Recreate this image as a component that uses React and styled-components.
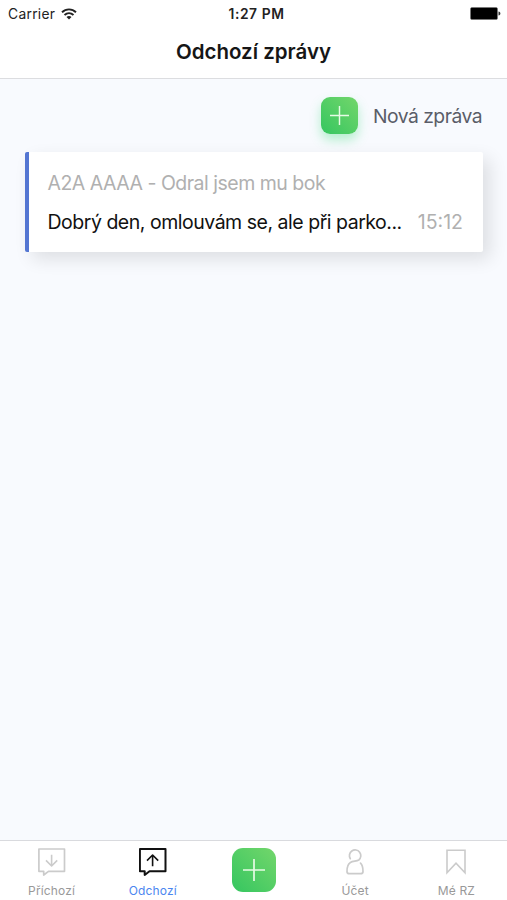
import React from "react";
import styled, { createGlobalStyle } from "styled-components";

const GlobalStyle = createGlobalStyle`
  *, *::before, *::after { box-sizing: border-box; }
  body { margin: 0; font-family: Inter, "Liberation Sans", sans-serif; background: #f8fafe; }
`;

const Screen = styled.div`
  display: flex;
  flex-direction: column;
  width: 507px;
  height: 900px;
  overflow: hidden;
  background: #f8fafe;
`;

const Header = styled.header`
  height: 79px;
  flex: none;
  background: #fff;
  border-bottom: 1px solid #dcdde0;
`;

const StatusBar = styled.div`
  display: grid;
  grid-template-columns: 1fr auto 1fr;
  align-items: center;
  height: 27px;
  padding: 0 6px 0 8px;
  color: #222;
`;

const Carrier = styled.div`
  display: flex;
  align-items: center;
  gap: 6px;
  font-size: 13.8px;
  letter-spacing: 0.3px;
`;

const Clock = styled.div`
  padding-left: 4px;
  font-size: 13.8px;
  font-weight: 600;
  letter-spacing: 0.6px;
`;

const BatterySlot = styled.div`
  display: flex;
  justify-content: flex-end;
`;

const Title = styled.h1`
  margin: 0;
  padding-top: 12px;
  font-size: 20.5px;
  line-height: 26px;
  font-weight: 600;
  text-align: center;
  color: #161616;
`;

const Content = styled.main`
  flex: 1;
  padding: 18px 24px 0 25px;
`;

const NewMessage = styled.div`
  display: flex;
  justify-content: flex-end;
  align-items: center;
  gap: 14.5px;
  height: 37px;
  padding-right: 1px;
`;

const NewLabel = styled.span`
  font-size: 19.3px;
  letter-spacing: -0.5px;
  color: #5a5d68;
`;

const AddButton = styled.button`
  display: grid;
  place-items: center;
  width: ${(p) => p.$size}px;
  height: ${(p) => p.$size}px;
  padding: 0;
  border: 0;
  border-radius: ${(p) => p.$radius}px;
  background: linear-gradient(45deg, #35c660, #73d66b);
  box-shadow: ${(p) => (p.$glow ? "0 6px 11px rgba(53, 218, 115, 0.35)" : "none")};
`;

const MessageCard = styled.article`
  height: 100px;
  margin-top: 18px;
  padding: 18px 20px 0 18.5px;
  border-left: 4px solid #5476d2;
  border-radius: 2px;
  background: #fff;
  box-shadow: 7px 7px 18px rgba(0, 0, 0, 0.11);
`;

const Subject = styled.div`
  font-size: 19.5px;
  line-height: 26px;
  letter-spacing: -0.5px;
  white-space: nowrap;
  color: #b0b0b0;
`;

const PreviewRow = styled.div`
  display: flex;
  justify-content: space-between;
  margin-top: 13px;
  font-size: 19.5px;
  line-height: 26px;
  white-space: nowrap;
`;

const Preview = styled.span`
  letter-spacing: -0.48px;
  color: #111;
`;

const Time = styled.time`
  color: #b0b0b0;
`;

const TabBar = styled.nav`
  display: grid;
  grid-template-columns: repeat(5, 1fr);
  flex: none;
  height: 60px;
  padding-left: 1px;
  border-top: 1px solid #d9dade;
  background: #fff;
`;

const Tab = styled.div`
  display: flex;
  flex-direction: column;
  align-items: center;
  padding-top: 7px;
  color: ${(p) => (p.$active ? "#111" : "#cbcbcb")};
`;

const TabLabel = styled.span`
  margin-top: 6px;
  font-size: 12px;
  line-height: 16px;
  letter-spacing: 0.15px;
  color: ${(p) => (p.$active ? "#4b86f0" : "#999")};
`;

const Wifi = () => (
  <svg width="16" height="12" viewBox="0 0 16 12" fill="none" stroke="#222" strokeWidth="1.9">
    <path d="M1 4.3C5 .4 11 .4 15 4.3M3.5 7C6.2 4.5 9.8 4.5 12.5 7" />
    <path d="M8 11.5 5.5 9C7 7.7 9 7.7 10.5 9Z" fill="#222" stroke="none" />
  </svg>
);

const Battery = () => (
  <svg width="31" height="13" viewBox="0 0 31 13">
    <rect x=".5" y=".5" width="27" height="12" rx="1.5" stroke="#777" strokeWidth=".8" />
    <rect x="1" y="1" width="26" height="11" rx="1" />
    <path d="M28.5 4.5C31 5 31 8 28.5 8.5Z" fill="#333" />
  </svg>
);

const Plus = ({ size }) => (
  <svg width={size} height={size} viewBox="0 0 22 22" stroke="#e7fbe5" strokeWidth="1.7">
    <path d="M11 0V22M0 11H22" />
  </svg>
);

const MessageIcon = ({ up }) => (
  <svg width="28" height="29" viewBox="0 0 28 29" fill="none" stroke="currentColor" strokeWidth={up ? 2 : 1.7} strokeLinejoin="round">
    <path d="M.9 1H26.5V23.3H10.5L5.7 27V23.3H.9Z" />
    <path strokeWidth="1.6" d={up ? "M13.6 18.3V7M8 12.6 13.6 7 19.2 12.6" : "M13.6 6.7V18M8 12.4 13.6 18 19.2 12.4"} />
  </svg>
);

const PersonIcon = () => (
  <svg width="18" height="29" viewBox="0 0 18 29" fill="none" stroke="currentColor" strokeWidth="1.7" strokeLinecap="round" strokeLinejoin="round">
    <path d="M4.3 10.7A5.7 5.7 0 1 1 12.8 12C10.5 13.5 7.2 12.9 4.4 14.5C1.4 16.3 1 19 1 23.4C1 25.2 1.6 25.7 3.3 25.7H14.6C16.4 25.7 17 25.2 17 23.4C17 20 17 17.3 14.5 15.1" />
  </svg>
);

const BookmarkIcon = () => (
  <svg width="20" height="29" viewBox="0 0 20 29" fill="none" stroke="currentColor" strokeWidth="1.6" strokeLinejoin="miter">
    <path d="M1 2.2H19V24.7L10 15.2L1 24.7Z" />
  </svg>
);

export default function App() {
  return (
    <Screen>
      <GlobalStyle />
      <Header>
        <StatusBar>
          <Carrier>Carrier<Wifi /></Carrier>
          <Clock>1:27 PM</Clock>
          <BatterySlot><Battery /></BatterySlot>
        </StatusBar>
        <Title>Odchozí zprávy</Title>
      </Header>
      <Content>
        <NewMessage>
          <AddButton $size={37} $radius={9} $glow aria-label="Nová zpráva"><Plus size={19} /></AddButton>
          <NewLabel>Nová zpráva</NewLabel>
        </NewMessage>
        <MessageCard>
          <Subject>A2A AAAA - Odral jsem mu bok</Subject>
          <PreviewRow>
            <Preview>Dobrý den, omlouvám se, ale při parko...</Preview>
            <Time>15:12</Time>
          </PreviewRow>
        </MessageCard>
      </Content>
      <TabBar>
        <Tab><MessageIcon /><TabLabel>Příchozí</TabLabel></Tab>
        <Tab $active><MessageIcon up /><TabLabel $active>Odchozí</TabLabel></Tab>
        <Tab><AddButton $size={44} $radius={11} aria-label="+"><Plus size={22} /></AddButton></Tab>
        <Tab><PersonIcon /><TabLabel>Účet</TabLabel></Tab>
        <Tab><BookmarkIcon /><TabLabel>Mé RZ</TabLabel></Tab>
      </TabBar>
    </Screen>
  );
}
